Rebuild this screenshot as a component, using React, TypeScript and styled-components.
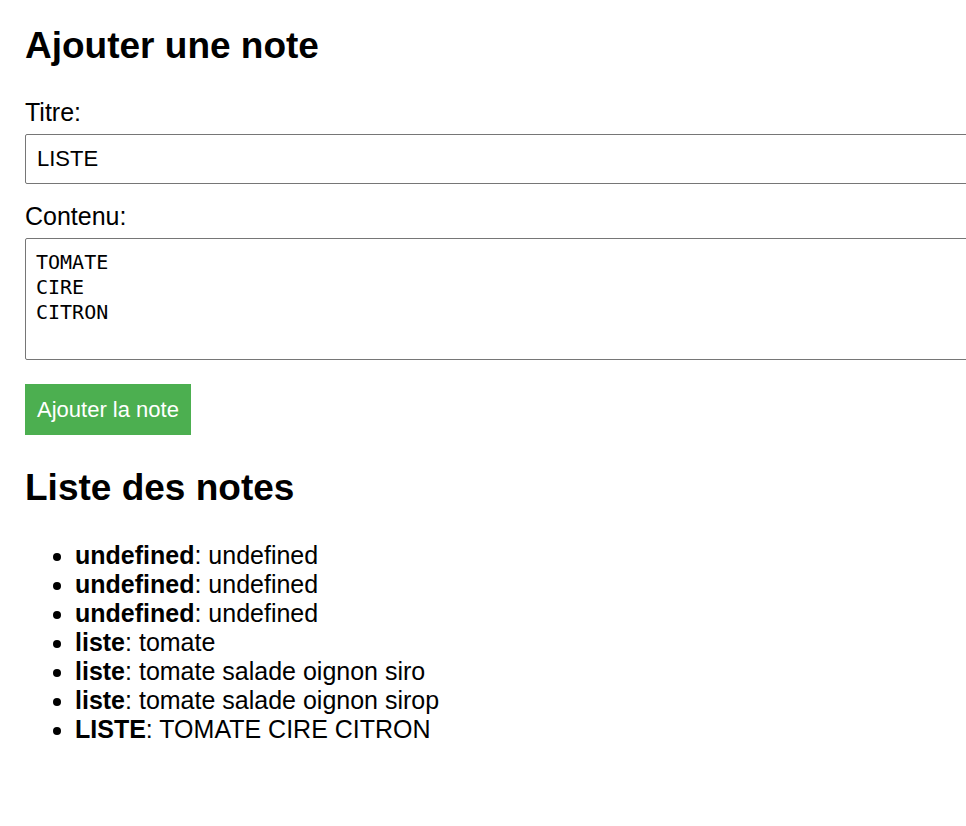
import { useState } from "react";
import styled, { createGlobalStyle } from "styled-components";

const GlobalStyle = createGlobalStyle`
  body {
    margin: 0;
    background: #fff;
    color: #000;
    font-family: "Liberation Sans", Arial, sans-serif;
    font-size: 25px;
    line-height: 29px;
    overflow-x: hidden;
  }
`;

const Page = styled.main`
  padding: 24px 0 24px 25px;
`;

const Heading = styled.h2`
  margin: 0;
  font-size: 37px;
  line-height: 44px;
  font-weight: 700;
`;

const NoteForm = styled.form`
  display: flex;
  flex-direction: column;
  align-items: flex-start;
  padding: 30px 0 31px;
`;

const Label = styled.label`
  margin-bottom: 7px;
`;

const TitleInput = styled.input`
  box-sizing: border-box;
  width: calc(100% + 4px);
  height: 50px;
  margin: 0 0 18px;
  padding: 10px 11px;
  border: 1px solid #767676;
  border-radius: 2px;
  background: #fff;
  color: #000;
  font: 22px "Liberation Sans", Arial, sans-serif;
  outline: none;
`;

const ContentInput = styled.textarea`
  box-sizing: border-box;
  width: calc(100% + 4px);
  height: 122px;
  margin: 0 0 24px;
  padding: 11px 10px;
  border: 1px solid #767676;
  border-radius: 2px;
  background: #fff;
  color: #000;
  font: 20px/25px "DejaVu Sans Mono", monospace;
  resize: none;
  overflow: hidden;
  outline: none;
`;

const SubmitButton = styled.button`
  padding: 13px 12px;
  border: 0;
  background: #4caf50;
  color: #fff;
  font: 22px/25px "Liberation Sans", Arial, sans-serif;
  cursor: pointer;
`;

const NoteList = styled.ul`
  margin: 31px 0 0;
  padding: 0 0 0 50px;
`;

const notes = [
  { title: "undefined", content: "undefined" },
  { title: "undefined", content: "undefined" },
  { title: "undefined", content: "undefined" },
  { title: "liste", content: "tomate" },
  { title: "liste", content: "tomate salade oignon siro" },
  { title: "liste", content: "tomate salade oignon sirop" },
  { title: "LISTE", content: "TOMATE CIRE CITRON" },
];

export default function App() {
  const [title, setTitle] = useState("LISTE");
  const [content, setContent] = useState("TOMATE\nCIRE\nCITRON");

  return (
    <>
      <GlobalStyle />
      <Page>
        <Heading>Ajouter une note</Heading>
        <NoteForm onSubmit={(event) => event.preventDefault()}>
          <Label htmlFor="title">Titre:</Label>
          <TitleInput
            id="title"
            type="text"
            value={title}
            onChange={(event) => setTitle(event.target.value)}
          />
          <Label htmlFor="content">Contenu:</Label>
          <ContentInput
            id="content"
            spellCheck={false}
            value={content}
            onChange={(event) => setContent(event.target.value)}
          />
          <SubmitButton type="submit">Ajouter la note</SubmitButton>
        </NoteForm>
        <Heading>Liste des notes</Heading>
        <NoteList>
          {notes.map((note, index) => (
            <li key={index}>
              <strong>{note.title}</strong>: {note.content}
            </li>
          ))}
        </NoteList>
      </Page>
    </>
  );
}
